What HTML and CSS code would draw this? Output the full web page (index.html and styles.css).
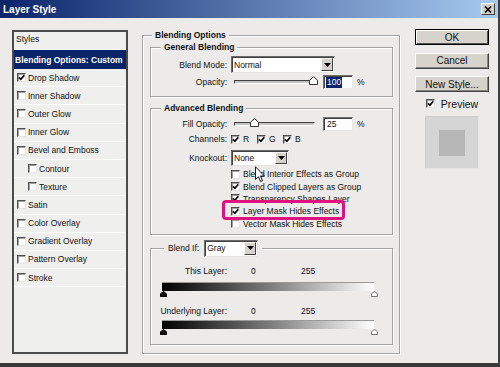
FILE: index.html
```html
<!DOCTYPE html>
<html>
<head>
<meta charset="utf-8">
<title>Layer Style</title>
<link rel="stylesheet" href="styles.css">
</head>
<body>
<div class="window">
  <div class="titlebar">
    <span class="title">Layer Style</span>
    <span class="close"><svg width="8" height="7" viewBox="0 0 8 7"><path d="M1 0.5 L7 6.5 M7 0.5 L1 6.5" stroke="#000" stroke-width="1.6"/></svg></span>
  </div>
  <div class="content">
    <div class="styles-list">
      <div class="row head">Styles</div>
      <div class="row selected">Blending Options: Custom</div>
      <div class="row"><span class="cb"><svg viewBox="0 0 7 7"><path d="M1 3.3 L2.9 5.3 L6.3 1.3" /></svg></span>Drop Shadow</div>
      <div class="row"><span class="cb"></span>Inner Shadow</div>
      <div class="row"><span class="cb"></span>Outer Glow</div>
      <div class="row"><span class="cb"></span>Inner Glow</div>
      <div class="row"><span class="cb"></span>Bevel and Emboss</div>
      <div class="row sub"><span class="cb"></span>Contour</div>
      <div class="row sub"><span class="cb"></span>Texture</div>
      <div class="row"><span class="cb"></span>Satin</div>
      <div class="row"><span class="cb"></span>Color Overlay</div>
      <div class="row"><span class="cb"></span>Gradient Overlay</div>
      <div class="row"><span class="cb"></span>Pattern Overlay</div>
      <div class="row"><span class="cb"></span>Stroke</div>
    </div>

    <fieldset class="group outer">
      <legend>Blending Options</legend>

      <fieldset class="group general">
        <legend>General Blending</legend>
        <div class="frow h17">
          <span class="lbl">Blend Mode:</span>
          <div class="select w-mode"><span class="val">Normal</span><span class="drop"><svg width="7" height="4" viewBox="0 0 7 4"><path d="M0 0 H7 L3.5 4 Z"/></svg></span></div>
        </div>
        <div class="frow h14 mt2">
          <span class="lbl">Opacity:</span>
          <div class="slider"><span class="thumb" style="left:100%"><svg width="9" height="9" viewBox="0 0 9 9"><path d="M0.5 8.5 V4.2 L4.5 0.6 L8.5 4.2 V8.5 Z"/></svg></span></div>
          <span class="num"><span class="hl">100</span></span>
          <span class="pct">%</span>
        </div>
      </fieldset>

      <fieldset class="group advanced">
        <legend>Advanced Blending</legend>
        <div class="frow h14">
          <span class="lbl">Fill Opacity:</span>
          <div class="slider"><span class="thumb" style="left:25%"><svg width="9" height="9" viewBox="0 0 9 9"><path d="M0.5 8.5 V4.2 L4.5 0.6 L8.5 4.2 V8.5 Z"/></svg></span></div>
          <span class="num">25</span>
          <span class="pct">%</span>
        </div>
        <div class="frow h13 mt1">
          <span class="lbl">Channels:</span>
          <span class="cb"><svg viewBox="0 0 7 7"><path d="M1 3.3 L2.9 5.3 L6.3 1.3" /></svg></span><span class="ch">R</span>
          <span class="cb"><svg viewBox="0 0 7 7"><path d="M1 3.3 L2.9 5.3 L6.3 1.3" /></svg></span><span class="ch">G</span>
          <span class="cb"><svg viewBox="0 0 7 7"><path d="M1 3.3 L2.9 5.3 L6.3 1.3" /></svg></span><span class="ch">B</span>
        </div>
        <div class="frow h16 mt4">
          <span class="lbl">Knockout:</span>
          <div class="select w-knock"><span class="val">None</span><span class="drop"><svg width="7" height="4" viewBox="0 0 7 4"><path d="M0 0 H7 L3.5 4 Z"/></svg></span></div>
        </div>
        <div class="checks">
          <div class="crow"><span class="cb"></span>Blend Interior Effects as Group</div>
          <div class="crow"><span class="cb"><svg viewBox="0 0 7 7"><path d="M1 3.3 L2.9 5.3 L6.3 1.3" /></svg></span>Blend Clipped Layers as Group</div>
          <div class="crow"><span class="cb"><svg viewBox="0 0 7 7"><path d="M1 3.3 L2.9 5.3 L6.3 1.3" /></svg></span>Transparency Shapes Layer</div>
          <div class="crow"><span class="cb"><svg viewBox="0 0 7 7"><path d="M1 3.3 L2.9 5.3 L6.3 1.3" /></svg></span>Layer Mask Hides Effects</div>
          <div class="crow"><span class="cb"></span>Vector Mask Hides Effects</div>
        </div>
      </fieldset>

      <fieldset class="group blendif">
        <legend><span>Blend If:</span><div class="select w-gray"><span class="val">Gray</span><span class="drop"><svg width="7" height="4" viewBox="0 0 7 4"><path d="M0 0 H7 L3.5 4 Z"/></svg></span></div></legend>
        <div class="vrow"><span class="lbl">This Layer:</span><span class="v0">0</span><span>255</span></div>
        <div class="ramp mt5"></div>
        <div class="markers">
          <svg width="7" height="6" viewBox="0 0 7 6"><path class="mk-black" d="M0.5 5.5 V2.8 L3.5 0.5 L6.5 2.8 V5.5 Z"/></svg>
          <svg width="7" height="6" viewBox="0 0 7 6"><path class="mk-white" d="M0.5 5.5 V2.8 L3.5 0.5 L6.5 2.8 V5.5 Z"/></svg>
        </div>
        <div class="vrow mt8"><span class="lbl">Underlying Layer:</span><span class="v0">0</span><span>255</span></div>
        <div class="ramp mt3"></div>
        <div class="markers">
          <svg width="7" height="6" viewBox="0 0 7 6"><path class="mk-black" d="M0.5 5.5 V2.8 L3.5 0.5 L6.5 2.8 V5.5 Z"/></svg>
          <svg width="7" height="6" viewBox="0 0 7 6"><path class="mk-white" d="M0.5 5.5 V2.8 L3.5 0.5 L6.5 2.8 V5.5 Z"/></svg>
        </div>
      </fieldset>
    </fieldset>

    <div class="buttons">
      <div class="btn default">OK</div>
      <div class="btn">Cancel</div>
      <div class="btn">New Style...</div>
      <div class="preview"><span class="cb"><svg viewBox="0 0 7 7"><path d="M1 3.3 L2.9 5.3 L6.3 1.3" /></svg></span>Preview</div>
      <div class="swatch"><div class="swatch-inner"></div></div>
    </div>
  </div>

  <div class="callout"></div>
  <svg class="cursor" width="10" height="17" viewBox="0 0 11 18"><path d="M0.5 0.5 V14.5 L3.8 11.4 L6.2 16.8 L8.3 15.9 L6 10.6 L10.3 10.6 Z"/></svg>
</div>
</body>
</html>
```
FILE: styles.css
```css
* { box-sizing: border-box; }
html, body { margin: 0; padding: 0; }
body {
  width: 500px;
  height: 367px;
  overflow: hidden;
  background: #ecebe9;
  font-family: "Liberation Sans", Arial, sans-serif;
  font-size: 8.5px;
  color: #111;
}
.window {
  position: relative;
  width: 500px;
  height: 367px;
  background: #ecebe9;
  border-right: 2px solid #3f3f3f;
  border-bottom: 4px solid #3a3a3a;
}

/* title bar */
.titlebar {
  height: 18px;
  display: flex;
  align-items: center;
  justify-content: space-between;
  padding: 0 3px 0 3px;
  background: linear-gradient(90deg, #0a246a 0%, #a6caf0 100%);
}
.title { color: #fff; font-weight: bold; font-size: 10px; }
.close {
  width: 14px;
  height: 12px;
  background: #d4d0c8;
  border: 1px solid;
  border-color: #fff #404040 #404040 #fff;
  display: flex;
  align-items: center;
  justify-content: center;
}
.close svg { display: block; }

/* main content */
.content {
  display: flex;
  align-items: flex-start;
  padding: 12px 0 0 12px;
}

/* styles list */
.styles-list {
  width: 116px;
  height: 324px;
  flex: none;
  border: 2px solid #4a4a4a;
  background: #efefee;
  margin-right: 14px;
}
.row {
  height: 18.2px;
  display: flex;
  align-items: center;
  padding-left: 3px;
  border-bottom: 1px solid #fbfbfb;
  white-space: nowrap;
}
.row.head { height: 18px; padding: 0 0 3px 2px; }
.row.selected {
  height: 19px;
  background: #0a246a;
  color: #fff;
  font-weight: bold;
  padding-left: 1px;
  border-bottom: none;
}
.row.sub { padding-left: 14px; }

/* checkbox */
.cb {
  width: 9px;
  height: 9px;
  flex: none;
  display: inline-flex;
  background: #fff;
  border: 1px solid;
  border-color: #505050 #e4e4e4 #e4e4e4 #505050;
  box-shadow: inset 1px 1px 0 #a0a0a0;
  margin-right: 2px;
}
.cb svg { width: 7px; height: 7px; display: block; }
.cb path { fill: none; stroke: #000; stroke-width: 1.7; }

/* group boxes */
fieldset.group {
  margin: 0;
  min-width: 0;
  border: 1px solid #a3a3a3;
  box-shadow: 1px 1px 0 #fff, inset 1px 1px 0 #fff;
}
fieldset.group > legend {
  font-weight: bold;
  line-height: 10px;
  padding: 0 3px;
  background: #ecebe9;
  white-space: nowrap;
}
fieldset.outer {
  width: 258px;
  flex: none;
  padding: 2px 6px 8px 7px;
}
fieldset.outer > legend { margin-left: 2px; }
fieldset.general, fieldset.advanced, fieldset.blendif { width: 243px; }
fieldset.general { padding: 4px 6px 7px 6px; }
fieldset.general > legend, fieldset.advanced > legend { margin-left: 4px; }
fieldset.advanced { margin-top: 6px; padding: 4px 6px 4px 6px; }

/* form rows */
.frow { display: flex; align-items: center; }
.h13 { height: 13px; }
.h14 { height: 14px; }
.h16 { height: 16px; }
.h17 { height: 17px; }
.mt1 { margin-top: 1.5px; }
.mt2 { margin-top: 2px; }
.mt3 { margin-top: 3.5px; }
.mt4 { margin-top: 4px; }
.mt5 { margin-top: 5px; }
.mt8 { margin-top: 8.5px; }
.lbl {
  width: 70px;
  flex: none;
  text-align: right;
  margin-right: 4px;
  white-space: nowrap;
}

/* select */
.select {
  display: flex;
  align-items: stretch;
  height: 17px;
  background: #fff;
  border: 1px solid;
  border-color: #6a6a6a #e4e4e4 #e4e4e4 #6a6a6a;
  box-shadow: inset 1px 1px 0 #404040;
  padding: 1px 1px 1px 2px;
  font-weight: normal;
}
.select .val { flex: 1; display: flex; align-items: center; }
.select .drop {
  width: 12px;
  background: #d6d3cd;
  border: 1px solid;
  border-color: #f6f6f6 #404040 #404040 #f6f6f6;
  display: flex;
  align-items: center;
  justify-content: center;
}
.select .drop svg { display: block; }
.w-mode { width: 104px; }
.w-knock { width: 58px; height: 16px; }
.w-gray { width: 54px; margin-left: 5px; }

/* slider */
.slider {
  position: relative;
  width: 81px;
  height: 4px;
  margin-left: 3px;
  background: #c4c4c4;
  border-top: 1px solid #404040;
  border-left: 1px solid #404040;
  border-bottom: 1px solid #fff;
  border-right: 1px solid #fff;
}
.thumb {
  position: absolute;
  top: -5px;
  margin-left: -5px;
  width: 9px;
  height: 9px;
}
.thumb svg { display: block; }
.thumb path { fill: #fff; stroke: #333; stroke-width: 1; }

/* numeric field */
.num {
  width: 30px;
  height: 14px;
  margin-left: 8px;
  background: #fff;
  border: 1px solid;
  border-color: #707070 #e8e8e8 #e8e8e8 #707070;
  box-shadow: inset 1px 1px 0 #404040;
  padding-left: 3px;
  display: flex;
  align-items: center;
}
.num .hl { background: #0a246a; color: #fff; line-height: 11px; padding: 0 1px; margin-left: -1px; }
.pct { margin-left: 4px; }

/* channels */
.ch { margin-left: 1px; width: 14px; }

/* check list */
.checks { margin-top: 2.5px; padding-left: 74px; }
.crow { height: 12.4px; display: flex; align-items: center; white-space: nowrap; }
.crow .cb { margin-right: 3px; }

/* blend if */
fieldset.blendif { margin-top: 5px; padding: 9px 6px 9px 6px; }
fieldset.blendif > legend {
  display: flex;
  align-items: center;
  font-weight: normal;
  line-height: normal;
  margin-left: 7px;
  padding: 0 4px;
}
.vrow { display: flex; align-items: center; height: 11px; }
.vrow .v0 { margin-left: 20px; width: 50px; }
.ramp {
  width: 212px;
  height: 9px;
  margin-left: 5px;
  background: linear-gradient(90deg, #000 0%, #7a7a7a 50%, #fff 100%);
  border-top: 1px solid #9a9a9a;
}
.markers {
  width: 218px;
  height: 6px;
  margin-left: 3px;
  display: flex;
  justify-content: space-between;
}
.markers svg { display: block; }
.mk-black { fill: #111; stroke: #000; stroke-width: 1; }
.mk-white { fill: #fff; stroke: #777; stroke-width: 1; }

/* buttons column */
.buttons {
  width: 74px;
  flex: none;
  margin-left: 15px;
  margin-top: -1px;
  display: flex;
  flex-direction: column;
  align-items: center;
}
.btn {
  width: 74px;
  height: 16px;
  background: #d6d3cd;
  border: 1px solid;
  border-color: #fff #404040 #404040 #fff;
  box-shadow: inset -1px -1px 0 #888;
  font-size: 10px;
  color: #111;
  display: flex;
  align-items: center;
  justify-content: center;
  margin-bottom: 7.5px;
}
.btn.default {
  border-color: #000;
  box-shadow: inset 1px 1px 0 #fff, inset -1px -1px 0 #555;
}
.preview {
  display: flex;
  align-items: center;
  height: 9px;
  font-size: 10.5px;
  margin-top: -0.5px;
}
.preview .cb { margin-right: 6px; }
.swatch {
  width: 54px;
  height: 53px;
  margin-top: 8px;
  background: #d5d5d5;
  border: 1px solid;
  border-color: #cdcdcd #e6e6e6 #e6e6e6 #cdcdcd;
  display: flex;
  align-items: center;
  justify-content: center;
}
.swatch-inner { width: 26px; height: 26px; background: #b7b7b7; }

/* overlays */
.callout {
  position: absolute;
  left: 222px;
  top: 200px;
  width: 123px;
  height: 20px;
  border: 3px solid #e0127f;
  border-radius: 4px;
}
.cursor { position: absolute; left: 255px; top: 166px; }
.cursor path { fill: #fff; stroke: #000; stroke-width: 1; }
```
